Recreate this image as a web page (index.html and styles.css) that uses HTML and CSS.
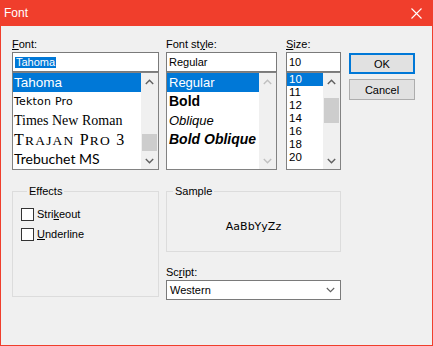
FILE: index.html
```html
<!DOCTYPE html>
<html>
<head>
<meta charset="utf-8">
<link rel="stylesheet" href="styles.css">
</head>
<body>
<div class="window">
  <div class="titlebar">
    <span class="title">Font</span>
    <svg class="close" width="11" height="11" viewBox="0 0 11 11"><path d="M0.5 0.5 L10.5 10.5 M10.5 0.5 L0.5 10.5" stroke="#fff" stroke-width="1.1" fill="none"/></svg>
  </div>
  <div class="client">
    <div class="top">
      <div class="col col-font">
        <div class="label"><u>F</u>ont:</div>
        <div class="input"><span class="sel-text">Tahoma</span></div>
        <div class="list">
          <div class="items">
            <div class="item selected f-tahoma">Tahoma</div>
            <div class="item f-tekton">Tekton Pro</div>
            <div class="item f-times">Times New Roman</div>
            <div class="item f-trajan"><span class="tcap">T</span><span class="tsc">rajan</span> <span class="tcap">P</span><span class="tsc">ro</span> <span class="tcap">3</span></div>
            <div class="item f-trebuchet">Trebuchet MS</div>
          </div>
          <div class="scroll">
            <div class="arrow"><svg width="9" height="6" viewBox="0 0 9 6"><path d="M0.8 5 L4.5 1.3 L8.2 5" stroke="#606060" stroke-width="1.4" fill="none"/></svg></div>
            <div class="track"><div class="thumb thumb-font"></div></div>
            <div class="arrow"><svg width="9" height="6" viewBox="0 0 9 6"><path d="M0.8 1 L4.5 4.7 L8.2 1" stroke="#606060" stroke-width="1.4" fill="none"/></svg></div>
          </div>
        </div>
      </div>
      <div class="col col-style">
        <div class="label">Font st<u>y</u>le:</div>
        <div class="input">Regular</div>
        <div class="list">
          <div class="items">
            <div class="item selected s-regular">Regular</div>
            <div class="item s-bold">Bold</div>
            <div class="item s-oblique">Oblique</div>
            <div class="item s-boldoblique">Bold Oblique</div>
          </div>
          <div class="scroll">
            <div class="arrow"><svg width="9" height="6" viewBox="0 0 9 6"><path d="M0.8 5 L4.5 1.3 L8.2 5" stroke="#c0c0c0" stroke-width="1.4" fill="none"/></svg></div>
            <div class="track"></div>
            <div class="arrow"><svg width="9" height="6" viewBox="0 0 9 6"><path d="M0.8 1 L4.5 4.7 L8.2 1" stroke="#c0c0c0" stroke-width="1.4" fill="none"/></svg></div>
          </div>
        </div>
      </div>
      <div class="col col-size">
        <div class="label"><u>S</u>ize:</div>
        <div class="input">10</div>
        <div class="list">
          <div class="items">
            <div class="item size-item selected">10</div>
            <div class="item size-item">11</div>
            <div class="item size-item">12</div>
            <div class="item size-item">14</div>
            <div class="item size-item">16</div>
            <div class="item size-item">18</div>
            <div class="item size-item">20</div>
          </div>
          <div class="scroll">
            <div class="arrow"><svg width="9" height="6" viewBox="0 0 9 6"><path d="M0.8 5 L4.5 1.3 L8.2 5" stroke="#606060" stroke-width="1.4" fill="none"/></svg></div>
            <div class="track"><div class="thumb thumb-size"></div></div>
            <div class="arrow"><svg width="9" height="6" viewBox="0 0 9 6"><path d="M0.8 1 L4.5 4.7 L8.2 1" stroke="#606060" stroke-width="1.4" fill="none"/></svg></div>
          </div>
        </div>
      </div>
      <div class="col col-buttons">
        <div class="btn btn-default">OK</div>
        <div class="btn">Cancel</div>
      </div>
    </div>
    <div class="bottom">
      <fieldset class="group effects">
        <legend>Effects</legend>
        <div class="check"><span class="box"></span><span>Stri<u>k</u>eout</span></div>
        <div class="check"><span class="box"></span><span><u>U</u>nderline</span></div>
      </fieldset>
      <div class="right">
        <fieldset class="group sample">
          <legend>Sample</legend>
          <div class="sample-text">AaBbYyZz</div>
        </fieldset>
        <div class="label script-label">Sc<u>r</u>ipt:</div>
        <div class="combo">
          <span>Western</span>
          <svg width="9" height="6" viewBox="0 0 9 6"><path d="M0.8 1 L4.5 4.7 L8.2 1" stroke="#606060" stroke-width="1.1" fill="none"/></svg>
        </div>
      </div>
    </div>
  </div>
</div>
</body>
</html>
```
FILE: styles.css
```css
* { box-sizing: border-box; }
html, body { margin: 0; padding: 0; }
body {
  width: 433px;
  height: 346px;
  overflow: hidden;
  font-family: "Liberation Sans", Arial, sans-serif;
  font-size: 11px;
  color: #000;
  background: #f0f0f0;
}
u { text-decoration: underline; text-underline-offset: 1px; }
.window {
  width: 433px;
  height: 346px;
  display: flex;
  flex-direction: column;
  background: #f03e2c;
}
.titlebar {
  height: 26px;
  flex: none;
  display: flex;
  align-items: center;
  justify-content: space-between;
  padding: 0 11px 0 4px;
  color: #fff;
  font-size: 12px;
}
.close { display: block; }
.client {
  flex: 1;
  margin: 0 1px 1px 1px;
  background: #f0f0f0;
  padding: 11px 0 0 11px;
}
.top { display: flex; align-items: flex-start; }
.col-font { width: 147px; }
.col-style { width: 111px; margin-left: 7px; }
.col-size { width: 55px; margin-left: 9px; }
.col-buttons { width: 66px; margin-left: 8px; padding-top: 16px; display: flex; flex-direction: column; gap: 5px; }
.label { height: 15px; line-height: 15px; white-space: nowrap; }
.input {
  height: 20px;
  border: 1px solid #7a7a7a;
  background: #fff;
  padding: 0 2px;
  display: flex;
  align-items: center;
}
.sel-text {
  background: #0078d7;
  color: #fff;
  line-height: 11px;
  padding: 0 1px 0 1px;
}
.list {
  height: 98px;
  border: 1px solid #828282;
  background: #fff;
  display: flex;
}
.items { flex: 1; min-width: 0; overflow: hidden; }
.item {
  height: 19px;
  line-height: 19px;
  padding-left: 1px;
  white-space: nowrap;
  overflow: hidden;
}
.item.selected { background: #0078d7; color: #fff; }
.f-tahoma { font-family: "Liberation Sans", Arial, sans-serif; font-size: 13.5px; }
.f-tekton { font-family: "DejaVu Sans", sans-serif; font-size: 11px; letter-spacing: 0.2px; }
.f-times { font-family: "Liberation Serif", "Times New Roman", serif; font-size: 14px; }
.f-trajan { font-family: "Liberation Serif", serif; font-size: 16px; letter-spacing: 1.2px; }
.tcap { font-size: 16px; }
.tsc { font-size: 13.5px; text-transform: uppercase; }
.f-trebuchet { font-family: Lato, "Liberation Sans", sans-serif; font-size: 14px; }
.s-regular, .s-oblique { font-size: 13px; padding-left: 2px; }
.s-oblique { font-style: italic; }
.s-bold, .s-boldoblique { font-size: 14px; font-weight: bold; padding-left: 2px; }
.s-boldoblique { font-style: italic; }
.size-item { height: 13px; line-height: 13px; font-size: 11.5px; padding-left: 2px; }
.scroll {
  width: 17px;
  flex: none;
  background: #f0f0f0;
  display: flex;
  flex-direction: column;
}
.arrow {
  height: 17px;
  flex: none;
  display: flex;
  align-items: center;
  justify-content: center;
}
.arrow svg { display: block; }
.track { flex: 1; }
.thumb { background: #cdcdcd; margin: 0 1px 0 1px; }
.thumb-font { margin-top: 44px; height: 17px; }
.thumb-size { margin-top: 8px; height: 25px; }
.btn {
  height: 21px;
  border: 1px solid #adadad;
  background: #e1e1e1;
  display: flex;
  align-items: center;
  justify-content: center;
}
.btn-default { border: 2px solid #0078d7; }
.bottom {
  display: flex;
  align-items: flex-start;
  margin-top: 14px;
}
.group {
  margin: 0;
  padding: 0;
  border: 1px solid #dcdcdc;
  min-width: 0;
}
.group legend {
  margin-left: 6px;
  padding: 0 2px;
  line-height: 14px;
  height: 14px;
}
.effects {
  width: 147px;
  height: 113px;
  padding: 6px 0 0 8px;
}
.check {
  display: flex;
  align-items: center;
  height: 20px;
}
.box {
  width: 13px;
  height: 13px;
  border: 1px solid #333;
  background: #fff;
  margin-right: 3px;
  flex: none;
}
.right { width: 175px; margin-left: 7px; display: flex; flex-direction: column; }
.sample {
  width: 175px;
  height: 68px;
}
.sample-text {
  height: 53px;
  display: flex;
  align-items: center;
  justify-content: center;
  padding-top: 3px;
  font-family: "DejaVu Sans", sans-serif;
  font-size: 11px;
}
.script-label { margin-top: 13px; }
.combo {
  height: 20px;
  border: 1px solid #7a7a7a;
  background: #fff;
  display: flex;
  align-items: center;
  justify-content: space-between;
  padding: 0 5px 0 3px;
}
.combo svg { display: block; }
```
